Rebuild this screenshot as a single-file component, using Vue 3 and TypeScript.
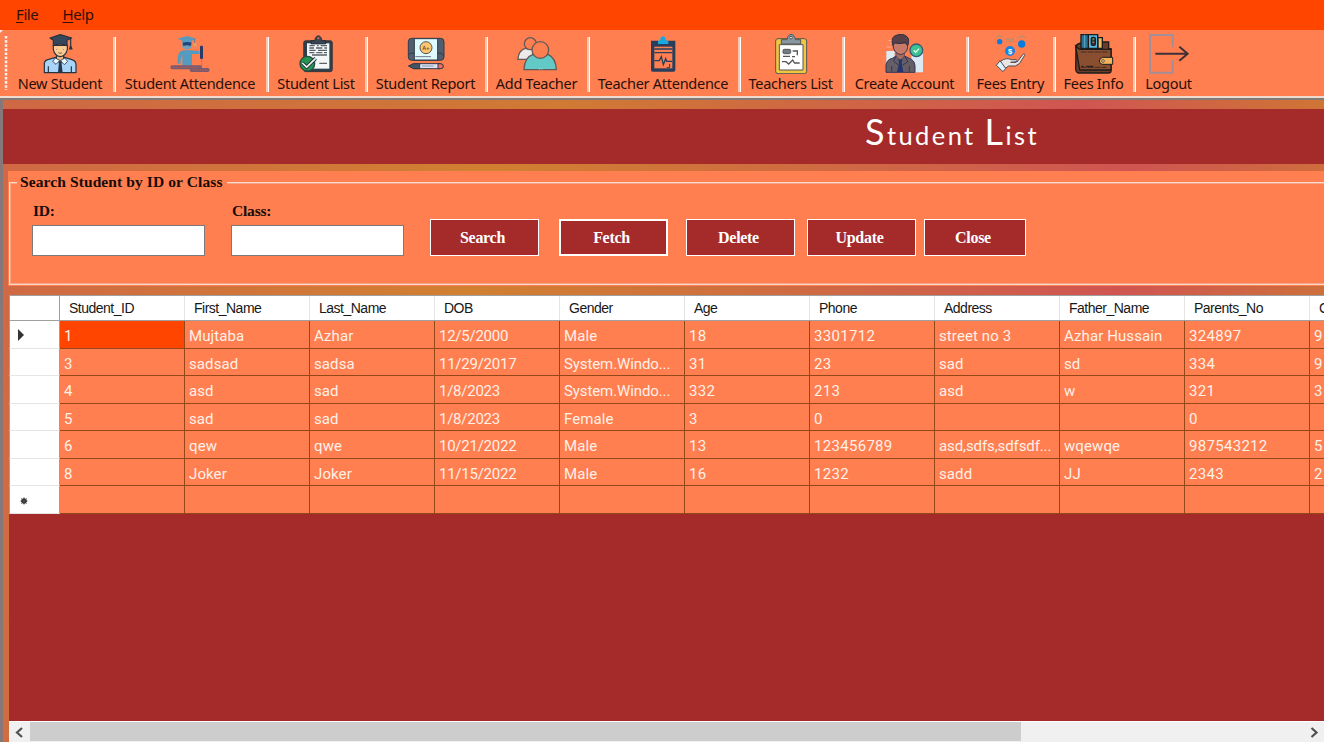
<script setup lang="ts">
interface Tool {
  id: string
  label: string
  box: string
}

const tools: Tool[] = [
  { id: 'new-student', label: 'New Student', box: '114 102 132 120' },
  { id: 'student-attendance', label: 'Student Attendence', box: '504 102 132 120' },
  { id: 'student-list', label: 'Student List', box: '100 18 132 120' },
  { id: 'student-report', label: 'Student Report', box: '429 18 132 120' },
  { id: 'add-teacher', label: 'Add Teacher', box: '102 18 132 120' },
  { id: 'teacher-attendance', label: 'Teacher Attendence', box: '481 18 132 120' },
  { id: 'teachers-list', label: 'Teachers List', box: '99 18 132 120' },
  { id: 'create-account', label: 'Create Account', box: '441 18 132 120' },
  { id: 'fees-entry', label: 'Fees Entry', box: '83 18 132 120' },
  { id: 'fees-info', label: 'Fees Info', box: '335 18 132 120' },
  { id: 'logout', label: 'Logout', box: '557 18 132 120' },
]

const columns: string[] = [
  'Student_ID', 'First_Name', 'Last_Name', 'DOB', 'Gender', 'Age',
  'Phone', 'Address', 'Father_Name', 'Parents_No', 'Class',
]

const rows: string[][] = [
  ['1', 'Mujtaba', 'Azhar', '12/5/2000', 'Male', '18', '3301712', 'street no 3', 'Azhar Hussain', '324897', '9'],
  ['3', 'sadsad', 'sadsa', '11/29/2017', 'System.Windo...', '31', '23', 'sad', 'sd', '334', '9'],
  ['4', 'asd', 'sad', '1/8/2023', 'System.Windo...', '332', '213', 'asd', 'w', '321', '3'],
  ['5', 'sad', 'sad', '1/8/2023', 'Female', '3', '0', '', '', '0', ''],
  ['6', 'qew', 'qwe', '10/21/2022', 'Male', '13', '123456789', 'asd,sdfs,sdfsdf...', 'wqewqe', '987543212', '5'],
  ['8', 'Joker', 'Joker', '11/15/2022', 'Male', '16', '1232', 'sadd', 'JJ', '2343', '2'],
  ['', '', '', '', '', '', '', '', '', '', ''],
]

const buttons: string[] = ['Search', 'Fetch', 'Delete', 'Update', 'Close']

function cellKind(value: string): string {
  if (/^\d+$/.test(value)) return 'number'
  if (value.includes('/')) return 'date'
  return value.length > 14 ? 'clipped' : 'text'
}
</script>

<template>
  <div class="window">
    <nav class="menu">
      <span class="file"><u>F</u>ile</span>
      <span class="help"><u>H</u>elp</span>
    </nav>

    <div class="toolbar">
      <svg class="grip" width="9" height="66" viewBox="0 0 9 66">
        <path d="M5 7V60" stroke="#c98468" stroke-width="2" stroke-dasharray="2 2.1" />
        <path d="M6 6V60" stroke="#ffeee6" stroke-width="2.500" stroke-dasharray="2.600 1.500" />
        <path d="M0 0H3L0 3Z" fill="#eee" />
      </svg>
      <div v-for="tool in tools" :key="tool.id" class="tool">
        <div class="tool-inner">
        <svg width="44" height="40" :viewBox="tool.box">
          <g v-if="tool.id === 'new-student'" stroke="#26323e" stroke-width="3.5" stroke-linejoin="round">
            <path d="M133 218V190Q134 180 146 178L167 172H193L216 179Q228 183 228 194V218Z" fill="#a9d4fa" />
            <path d="M170 164H191V178L181 190L169 178Z" fill="#f4b982" />
            <path d="M160 136V149Q164 168 181 170Q197 168 202 149V136Z" fill="#fccb92" />
            <path d="M166 174L158 184L168 193L180 181L193 194L203 184L194 174L181 182Z" fill="#e8f6ff" stroke-width="2.5" />
            <path d="M177 184H184L188 218H174Z" fill="#24384a" stroke="none" />
            <path d="M145 199V218M214 199V218" fill="none" />
            <path d="M150 114L181 104L215 114L201 121V137Q181 127 160 137V121Z" fill="#35475b" />
            <path d="M212 116V138M209 147L212 137L216 147Z" fill="#38506a" />
            <path d="M170 148V150M190 148V150M175 158Q181 162 186 158" fill="none" stroke-width="2" />
          </g>
          <g v-else-if="tool.id === 'student-attendance'">
            <path d="M547 127H575V142Q561 155 547 142Z" fill="#6da0bb" />
            <path d="M533 116L561 108L589 116L575 122V129H547V122Z" fill="#559ac0" />
            <path d="M548 128Q561 124 575 128L572 138Q561 133 550 138Z" fill="#23447a" />
            <path d="M584 116V130" stroke="#59809a" stroke-width="3" />
            <path d="M580 129H589L590 141L585 138L581 141Z" fill="#d9a46b" />
            <path d="M549 151H572L596 153Q603 158 596 162H576V197H547V164Q541 175 541 191H533Q531 164 540 155Z" fill="#539bc1" />
            <rect x="600" y="137" width="9" height="40" rx="3" fill="#2b3a67" />
            <path d="M605 177V199" stroke="#9b6675" stroke-width="2" stroke-dasharray="10 3" />
            <path d="M517 202H600M575 210H623" stroke="#795b6e" stroke-width="12" stroke-linecap="round" />
            <path d="M517 202H594M578 210H621" stroke="#a85d5e" stroke-width="3" stroke-linecap="round" />
          </g>
          <g v-else-if="tool.id === 'student-list'">
            <rect x="129" y="38" width="86" height="93" rx="6" fill="#30404b" stroke="#202a33" stroke-width="2" />
            <path d="M139 46H206V122H139Z" fill="#f4f7f8" />
            <path d="M151 48V38H162Q164 24 173 23Q182 24 184 38H195V48Z" fill="#384753" stroke="#17212a" stroke-width="2" />
            <circle cx="173" cy="31" r="3" fill="#dc7652" />
            <path d="M146 53H162M169 53H174M180 53H199M146 60H160M166 60H185M191 60H199M146 67H165M172 67H199M146 74H161M167 74H185M190 74H199M154 81H199M176 106H199" stroke="#58636a" stroke-width="4" />
            <circle cx="140" cy="107" r="22" fill="#269552" stroke="#265142" stroke-width="4" />
            <path d="M125 105L138 117L165 91" fill="none" stroke="#24343b" stroke-width="11" />
            <path d="M125 105L138 117L165 91" fill="none" stroke="#f2f4f3" stroke-width="5" />
          </g>
          <g v-else-if="tool.id === 'student-report'" stroke="#303b48" stroke-width="3">
            <rect x="442" y="31" width="107" height="66" rx="10" fill="#505e70" />
            <path d="M460 32H530V96H460Z" fill="#e0fbff" />
            <path d="M443 80Q449 72 460 76M530 76Q543 73 548 84" fill="none" />
            <circle cx="495" cy="59" r="18" fill="#ffc66d" stroke-width="2.5" />
            <text x="484" y="65" class="grade">A+</text>
            <path d="M463 86H510" stroke-width="2" />
            <path d="M443 114L458 107H537Q547 107 547 115Q547 122 537 122H458Z" fill="#dbe4f6" />
            <path d="M443 114L458 107H476V122H458Z" fill="#465364" />
            <path d="M531 107H538Q547 108 547 115Q547 122 538 122H531Z" fill="#f46d63" />
            <path d="M483 114H518" stroke="#8696ae" />
          </g>
          <g v-else-if="tool.id === 'add-teacher'" stroke="#625a58" stroke-width="4">
            <path d="M111 94Q112 68 132 61L156 63V94Z" fill="#eee9e9" />
            <circle cx="148" cy="47" r="18" fill="#ff7f50" />
            <path d="M129 125Q130 88 156 79Q178 94 201 79Q225 90 226 125Z" fill="#63c9c7" />
            <circle cx="178" cy="66" r="25" fill="#ff7f50" />
            <path d="M176 121V125M183 121V125" stroke="#c7ebe8" stroke-width="2" />
          </g>
          <g v-else-if="tool.id === 'teacher-attendance'">
            <path d="M511 38H533L539 48H554L560 38H584V127Q584 131 579 131H516Q511 131 511 127Z" fill="#293e5b" />
            <path d="M521 56H575V121H521Z" fill="#ff7f50" />
            <path d="M521 63H575M521 74H575M521 98H536L542 86L548 110L555 92L558 100H575" fill="none" stroke="#293e5b" stroke-width="4" />
            <path d="M567 108V119M558 119H567" stroke="#293e5b" stroke-width="3" />
            <path d="M532 48V39L539 36V30Q547 19 555 30V36L563 39V48Z" fill="#18a9e1" />
          </g>
          <g v-else-if="tool.id === 'teachers-list'" stroke="#545655" stroke-width="3">
            <rect x="119" y="32" width="93" height="105" rx="7" fill="#f0c640" />
            <path d="M130 50H201V126H130Z" fill="#fff" />
            <path d="M136 48V35H153Q155 20 165 19Q176 20 178 35H194V48Z" fill="#8997a2" />
            <circle cx="165" cy="29" r="4" fill="#e9eee9" />
            <rect x="141" y="64" width="23" height="13" rx="4" fill="#737b82" />
            <path d="M170 69H184V82M141 85H162M168 86H177M138 101H150L158 108L170 96L176 105H191" fill="none" stroke-width="4" />
          </g>
          <g v-else-if="tool.id === 'create-account'">
            <path d="M451 69H476V132H451ZM526 76H561V133H526Z" fill="#dceaf3" />
            <path d="M458 38H468M462 46H469M452 57H466" stroke="#f7b298" stroke-width="3" />
            <path d="M450 133V111Q453 94 469 91L482 83H503L520 91Q535 96 537 113V133Z" fill="#655e65" stroke="#34355b" stroke-width="3" />
            <path d="M480 84L493 99L505 84V73H480Z" fill="#a86d61" stroke="#453b56" stroke-width="2" />
            <path d="M472 45H515V58Q513 76 494 80Q475 76 472 57Z" fill="#c67b68" stroke="#41374c" stroke-width="3" />
            <path d="M470 52Q465 30 476 24Q498 13 513 26Q522 34 515 53L507 43Q491 50 478 44Z" fill="#574046" stroke="#302e45" stroke-width="3" />
            <path d="M487 94H499L497 104L502 132H483L489 104Z" fill="#26356f" />
            <path d="M467 114V131M520 114V131M479 86L473 100L487 111M507 86L516 101L500 111" fill="none" stroke="#34355b" stroke-width="3" />
            <circle cx="541" cy="67" r="19" fill="#3bc391" stroke="#355a77" stroke-width="4" />
            <path d="M533 67L539 73L549 62" fill="none" stroke="#effff3" stroke-width="4" />
          </g>
          <g v-else-if="tool.id === 'fees-entry'">
            <circle cx="118" cy="41" r="8" fill="#087be0" />
            <circle cx="184" cy="48" r="11" fill="#087be0" />
            <circle cx="149" cy="69" r="15" fill="#1584df" />
            <text x="143" y="77" class="coin">$</text>
            <path d="M108 27L117 22L128 27M173 29L185 24L196 29M140 43V31L149 37L158 31V43M149 37V46" fill="none" stroke="#a79272" stroke-width="4" stroke-dasharray="5 2" />
            <path d="M122 99Q139 87 153 95H167Q175 98 167 103H151L171 101L187 80Q194 74 193 82L177 107L165 114H145L132 123L116 108Z" fill="#e8e5e4" stroke="#514a50" stroke-width="3" stroke-linejoin="round" />
            <path d="M119 98L136 121L128 131L108 112Z" fill="#ddf3ff" stroke="#494f59" stroke-width="3" />
          </g>
          <g v-else-if="tool.id === 'fees-info'" stroke="#1c1c1d" stroke-width="4">
            <path d="M347 59Q345 49 361 45L430 42H445V62H452V129Q452 135 444 135H353Q346 132 346 124Z" fill="#6d3c27" />
            <path d="M362 20H386V61H362Z" fill="#287398" />
            <path d="M373 20V61" stroke="#83bbcd" stroke-width="2" />
            <path d="M384 20H412V61H384Z" fill="#52b8e2" />
            <path d="M413 29H426V61H413Z" fill="#f2b963" />
            <rect x="393" y="28" width="12" height="24" rx="4" fill="#253e34" />
            <path d="M397 33H402" stroke="#bccf62" stroke-width="3" />
            <path d="M396 43H402" stroke="#d65a4c" stroke-width="4" />
            <path d="M346 54L357 64H452V126H358Z" fill="#8a4e30" />
            <path d="M361 72H444M361 118H438" fill="none" stroke-width="2" stroke-dasharray="18 3" />
            <path d="M457 88H427Q417 92 417 99Q418 109 427 109H457Z" fill="#f4b25b" stroke-width="3" />
            <circle cx="428" cy="99" r="4" fill="#fff2b5" stroke-width="2" />
            <path d="M363 115H370M377 115H399" stroke-width="3" />
          </g>
          <g v-else fill="none">
            <path d="M634 58V21H566V134H634V96" stroke="#a18e99" stroke-width="6" />
            <path d="M582 77H676M654 56L679 77L654 98" stroke="#3d3139" stroke-width="6" />
          </g>
        </svg>
        <span class="tool-label">{{ tool.label }}</span>
        </div>
      </div>
    </div>

    <main class="content">
      <header class="title"><h1><b>S</b>tudent <b>L</b>ist</h1></header>

      <section class="search-panel">
        <div class="group">
          <span class="legend">Search Student by ID or Class</span>
          <label class="field"><span>ID:</span><input type="text"></label>
          <label class="field"><span>Class:</span><input type="text"></label>
          <div class="actions">
            <button v-for="name in buttons" :key="name" :class="name.toLowerCase()">{{ name }}</button>
          </div>
        </div>
      </section>

      <section class="sheet">
        <div class="grid head">
          <div class="corner"></div>
          <div v-for="name in columns" :key="name" class="th">{{ name }}</div>
        </div>
        <div v-for="(row, r) in rows" :key="r" class="grid row">
          <div class="rowhead">
            <svg v-if="r === 0" width="8" height="12" viewBox="0 0 8 12"><path d="M1 0V12L7 6Z" fill="#333" /></svg>
            <svg v-else-if="r === rows.length - 1" class="star" width="8" height="8" viewBox="0 0 8 8">
              <circle cx="4" cy="4" r="2.8" fill="#333" />
              <path d="M4 .5V7.5M.5 4H7.5M1.5 1.5L6.5 6.5M6.5 1.5L1.5 6.5" stroke="#444" />
            </svg>
          </div>
          <div
            v-for="(cell, c) in row"
            :key="c"
            class="td"
            :class="[cellKind(cell), { selected: r === 0 && c === 0 }]"
          >{{ cell }}</div>
        </div>
        <div class="scroll">
          <svg width="21" height="20" viewBox="0 0 21 20"><path d="M13 6L8 10.500L13 15" fill="none" stroke="#505050" stroke-width="2.2" /></svg>
          <div class="thumb"></div>
          <svg class="next" width="21" height="20" viewBox="0 0 21 20"><path d="M8.500 6L13.500 10.500L8.500 15" fill="none" stroke="#505050" stroke-width="2.2" /></svg>
        </div>
      </section>
    </main>
  </div>
</template>

<style>
body {
  overflow: hidden;
}
</style>

<style scoped>
* {
  box-sizing: border-box;
}
.window {
  width: 1324px;
  height: 742px;
  overflow: hidden;
  display: flex;
  flex-direction: column;
  background: #ff7f50;
}
.menu {
  height: 30px;
  flex: none;
  display: flex;
  gap: 24px;
  padding: 4px 0 0 16px;
  background: #ff4500;
  color: #301008;
  font: 15px/20px "Noto Sans", sans-serif;
  letter-spacing: -0.4px;
}
.menu u {
  text-underline-offset: 2px;
}
.toolbar {
  height: 70px;
  flex: none;
  display: grid;
  grid-template-columns: 9px 107px 153px 99px 120px 102px 151px 104px 124px 87px 80px 70px;
  background: linear-gradient(#ff7f50 0 66px, #f0d9cd 66px 68px, #817a77 68px 70px);
}
.tool {
  position: relative;
  display: flex;
  padding: 4px 12.5px 0 7.5px;
}
.tool::after {
  content: "";
  position: absolute;
  right: 0;
  top: 7px;
  width: 2px;
  height: 55px;
  background: #fbc5ae;
  border-right: 1px solid #fff;
}
.tool:last-child::after {
  display: none;
}
.tool-inner {
  flex: 1;
  display: flex;
  flex-direction: column;
  align-items: center;
}
.tool-inner svg {
  flex: none;
}
.tool-label {
  color: #28100a;
  font: 14.5px/18px "Noto Sans", sans-serif;
  letter-spacing: -0.27px;
  white-space: nowrap;
}
.grade {
  font: bold 16px "Liberation Sans", sans-serif;
  stroke: none;
  fill: #5b4a34;
}
.coin {
  font: bold 23px "Liberation Sans", sans-serif;
  fill: #fff;
}
.content {
  flex: 1;
  display: flex;
  flex-direction: column;
  padding-top: 9px;
  border-left: 3px solid #85777a;
  background:
    linear-gradient(90deg, #ce6845 0, #d07a34 560px, #cf6842 800px, #d05552 1080px, #cf7535 1321px) 0 0 / 100% 60px no-repeat,
    linear-gradient(98deg, #d06845 0, #d18031 490px, #cf6a42 820px, #d05552 1130px, #ce703a 1340px);
}
.title {
  height: 55px;
  flex: none;
  padding-left: 862px;
  background: #a52a2a;
}
.title h1 {
  margin: 0;
  color: #fff;
  font: 400 25.5px/44px Lato, sans-serif;
  letter-spacing: 2.4px;
  white-space: nowrap;
}
.title b {
  font-size: 36px;
  font-weight: 400;
}
.search-panel {
  height: 115px;
  flex: none;
  margin: 7px 0 9px 5px;
  padding: 11px 0 0 1px;
  background: #ff7f50;
}
.group {
  position: relative;
  width: 1400px;
  height: 103px;
  display: flex;
  padding: 17px 0 0 22px;
  border: 1px solid #f7dacc;
  outline: 1px solid #f5a488;
  outline-offset: -2px;
  color: #180b07;
  font: bold 15.5px/22px "Liberation Serif", serif;
}
.legend {
  position: absolute;
  left: 7px;
  top: -12px;
  padding: 0 4px 0 3px;
  background: #ff7f50;
  letter-spacing: 0.1px;
  white-space: nowrap;
}
.field {
  width: 199px;
  display: flex;
  flex-direction: column;
}
.field span {
  padding-left: 1px;
  letter-spacing: -0.2px;
}
.field input {
  width: 173px;
  height: 31px;
  margin-top: 3px;
  padding: 0 4px;
  border: 1px solid #7a7a7a;
  border-radius: 0;
  background: #fff;
}
.actions {
  display: flex;
  margin-top: 19px;
}
.actions button {
  width: 109px;
  height: 37px;
  margin: 0 19px 0 0;
  padding: 0 4px 0 0;
  border: 1px solid #fff;
  border-radius: 0;
  background: #a52a2a;
  color: #fff;
  font: bold 16px "Liberation Serif", serif;
  letter-spacing: -0.3px;
}
.actions .search {
  margin-right: 20px;
}
.actions .fetch {
  border-width: 2px;
  margin-right: 18px;
}
.actions .delete {
  margin-right: 12px;
}
.actions .update {
  margin-right: 8px;
}
.actions .close {
  width: 102px;
}
.sheet {
  flex: 1;
  display: flex;
  flex-direction: column;
  margin-left: 6px;
  overflow: hidden;
  background: #a52a2a;
}
.grid {
  display: grid;
  grid-template-columns: 51px repeat(11, 125px);
  flex: none;
}
.head {
  height: 26px;
  border-top: 1px solid #a0a0a0;
  border-bottom: 1px solid #a0a0a0;
  background: #fff;
  color: #181818;
  font: 14px/25px "Liberation Sans", sans-serif;
  letter-spacing: -0.5px;
}
.corner {
  border-left: 1px solid #a0a0a0;
  border-right: 1px solid #a0a0a0;
}
.th {
  padding-left: 9px;
  border-right: 1px solid #e5e5e5;
  overflow: hidden;
}
.row {
  height: 27.5px;
}
.rowhead {
  display: flex;
  align-items: center;
  padding: 2px 0 0 7px;
  border-left: 1px solid #a0a0a0;
  border-right: 1px solid #a0a0a0;
  border-bottom: 1px solid #e5e5e5;
  background: #fff;
}
.star {
  margin: 1px 0 0 3px;
}
.td {
  padding-left: 4px;
  overflow: hidden;
  border-right: 1px solid #954817;
  border-bottom: 1px solid #954817;
  background: #ff7f50;
  color: #fff0e8;
  font: 15px/31px Roboto, sans-serif;
  letter-spacing: 0.1px;
  white-space: nowrap;
}
.number {
  letter-spacing: 0.3px;
}
.date {
  letter-spacing: -0.25px;
}
.clipped {
  letter-spacing: -0.1px;
}
.selected {
  background: #ff4500;
}
.scroll {
  height: 21px;
  display: flex;
  margin-top: auto;
  border-top: 1px solid #fff;
  background: #f0f0f0;
}
.thumb {
  width: 991px;
  height: 19px;
  background: #cdcdcd;
}
.next {
  margin-left: auto;
}
</style>
